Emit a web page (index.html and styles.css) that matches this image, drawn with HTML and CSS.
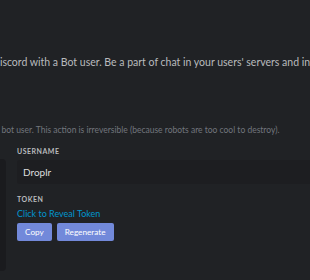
FILE: index.html
```html
<!DOCTYPE html>
<html lang="en">
<head>
  <meta charset="UTF-8" />
  <title>Bot - Developer Portal</title>
  <link rel="stylesheet" href="styles.css">
</head>
<body>

  <section class="intro">
    <p class="lead">Discord with a Bot user. Be a part of chat in your users' servers and interact with them directly.</p>
  </section>

  <section class="bot">
    <p class="note">a bot user. This action is irreversible (because robots are too cool to destroy).</p>

    <div class="bot-card">
      <div class="avatar-panel"></div>
      <div class="fields">
        <label class="label" for="username">Username</label>
        <input id="username" class="input" type="text" value="Droplr">

        <div class="label token-label">Token</div>
        <a href="#" class="reveal">Click to Reveal Token</a>
        <div class="actions">
          <button class="btn">Copy</button>
          <button class="btn">Regenerate</button>
        </div>
      </div>
    </div>
  </section>

</body>
</html>
```

FILE: styles.css
```css
*{margin:0;padding:0;box-sizing:border-box;}
html,body{background:#202225;}
body{font-family:Lato,'Noto Sans',sans-serif;color:#b9bbbe;width:310px;height:280px;overflow:hidden;}

.intro{padding-top:55px;margin-left:-8px;}
.lead{font-size:10.5px;line-height:14px;white-space:nowrap;color:#b9bbbe;}

.bot{padding-top:56px;}
.note{font-size:8.5px;line-height:11px;white-space:nowrap;color:#72767d;margin-left:-5px;}

.bot-card{display:flex;gap:11px;margin-top:11px;}
.avatar-panel{flex-shrink:0;width:6px;height:112px;margin-top:12px;background:#1a1b1e;border-radius:0 4px 4px 0;}
.fields{flex:1;min-width:0;display:flex;flex-direction:column;}

.label{display:block;font-size:7px;line-height:9px;font-weight:bold;letter-spacing:0.5px;text-transform:uppercase;color:#b9bbbe;}
.input{margin-top:4px;height:24px;width:300px;padding:0 6px;border:none;border-radius:3px 0 0 3px;background:#1d1e21;color:#dcddde;font-family:inherit;font-size:10px;outline:none;}
.token-label{margin-top:11px;}
.reveal{margin-top:4px;font-size:9px;line-height:12px;color:#0096cf;text-decoration:none;}

.actions{display:flex;gap:5px;margin-top:3px;}
.btn{height:18px;padding:0 8px;background:#7289da;color:#fff;border:none;border-radius:2px;font-family:inherit;font-size:8.2px;cursor:pointer;}
```
